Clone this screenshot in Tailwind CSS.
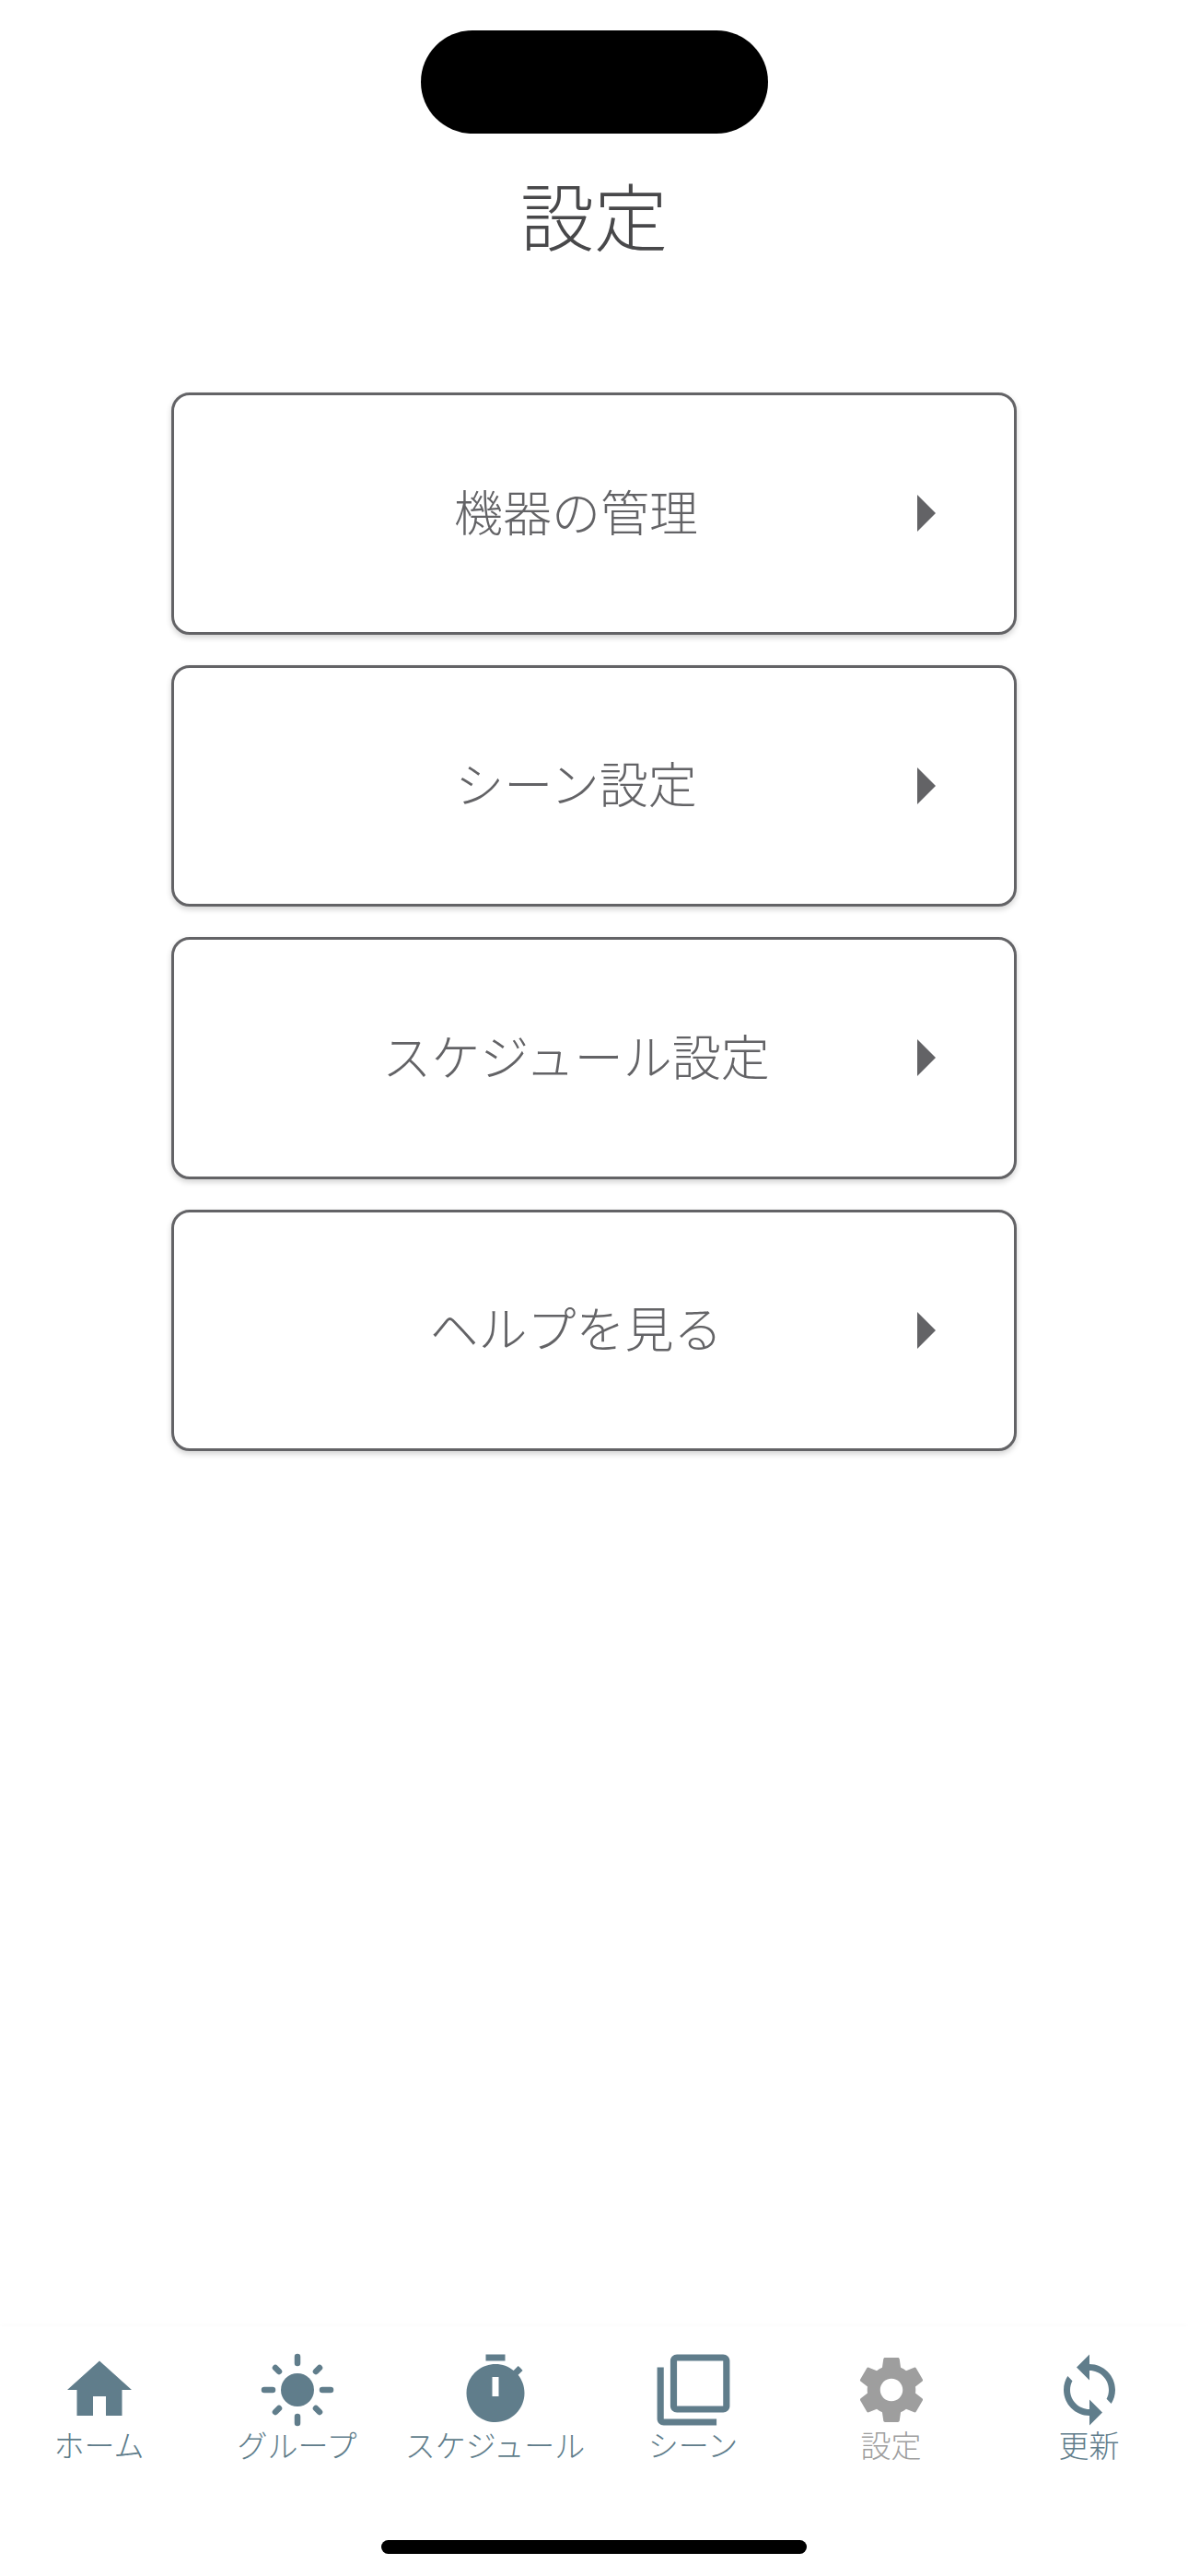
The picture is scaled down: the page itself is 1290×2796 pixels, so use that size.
<!DOCTYPE html>
<html lang="ja">
<head>
<meta charset="utf-8">
<script src="https://cdn.jsdelivr.net/npm/@tailwindcss/browser@4"></script>
</head>
<body class="bg-white">
<div class="relative flex flex-col w-[1290px] h-[2796px] bg-white overflow-hidden font-['Noto_Sans_CJK_JP','Noto_Sans',sans-serif]">
  <div class="absolute left-[457px] top-[33px] w-[377px] h-[112px] rounded-[56px] bg-black"></div>

  <h1 class="pt-[173px] h-[426px] text-center text-[80px] leading-[116px] font-light text-[#48484a]">設定</h1>

  <ul class="flex flex-col gap-[33px] w-[918px] mx-auto">
    <li class="flex items-center h-[262.5px] rounded-[20px] border-[3px] border-[#636366] bg-white shadow-[0_3px_6px_rgba(0,0,0,0.18)]">
      <span class="flex-1 pl-[66px] pb-[7px] text-center text-[53px] leading-[76px] font-light text-[#636366]">機器の管理</span>
      <svg class="w-[20px] h-[40px] mr-[85px]" viewBox="0 0 20 40"><path d="M0 0L20 20L0 40Z" fill="#636366"/></svg>
    </li>
    <li class="flex items-center h-[262.5px] rounded-[20px] border-[3px] border-[#636366] bg-white shadow-[0_3px_6px_rgba(0,0,0,0.18)]">
      <span class="flex-1 pl-[66px] pb-[7px] text-center text-[53px] leading-[76px] font-light text-[#636366]">シーン設定</span>
      <svg class="w-[20px] h-[40px] mr-[85px]" viewBox="0 0 20 40"><path d="M0 0L20 20L0 40Z" fill="#636366"/></svg>
    </li>
    <li class="flex items-center h-[262.5px] rounded-[20px] border-[3px] border-[#636366] bg-white shadow-[0_3px_6px_rgba(0,0,0,0.18)]">
      <span class="flex-1 pl-[66px] pb-[7px] text-center text-[53px] leading-[76px] font-light text-[#636366]">スケジュール設定</span>
      <svg class="w-[20px] h-[40px] mr-[85px]" viewBox="0 0 20 40"><path d="M0 0L20 20L0 40Z" fill="#636366"/></svg>
    </li>
    <li class="flex items-center h-[262.5px] rounded-[20px] border-[3px] border-[#636366] bg-white shadow-[0_3px_6px_rgba(0,0,0,0.18)]">
      <span class="flex-1 pl-[66px] pb-[7px] text-center text-[53px] leading-[76px] font-light text-[#636366]">ヘルプを見る</span>
      <svg class="w-[20px] h-[40px] mr-[85px]" viewBox="0 0 20 40"><path d="M0 0L20 20L0 40Z" fill="#636366"/></svg>
    </li>
  </ul>

  <div class="flex-1"></div>

  <nav class="grid grid-cols-6 h-[271px] px-0 pt-[27px] bg-white shadow-[0_-2px_6px_rgba(0,0,0,0.015)] text-[#607d8b]">
    <div class="flex flex-col items-center">
      <svg class="w-[84px] h-[84px]" viewBox="0 0 24 24" fill="currentColor"><path d="M10 20v-6h4v6h5v-8h3L12 3 2 12h3v8z"/></svg>
      <span class="text-[33px] leading-[34px] font-light whitespace-nowrap">ホーム</span>
    </div>
    <div class="flex flex-col items-center">
      <svg class="w-[84px] h-[84px]" viewBox="0 0 84 84" fill="currentColor" stroke="currentColor" stroke-width="6.5" stroke-linecap="round"><circle cx="42" cy="42" r="18" stroke="none"/><path d="M42 6V13M42 71V78M6 42H15M69 42H78M18 18L22 22M62 62L66 66M18 66L22 62M62 22L66 18"/></svg>
      <span class="text-[33px] leading-[34px] font-light whitespace-nowrap">グループ</span>
    </div>
    <div class="flex flex-col items-center">
      <svg class="w-[84px] h-[84px]" viewBox="0 0 24 24" fill="currentColor" fill-rule="evenodd"><path d="M15 1H9v2h6V1zm-4 13h2V8h-2v6zm8.03-6.61l1.42-1.42c-.43-.51-.9-.99-1.41-1.41l-1.42 1.42C16.07 4.74 14.12 4 12 4c-4.97 0-9 4.03-9 9s4.02 9 9 9 9-4.03 9-9c0-2.12-.74-4.07-1.97-5.61z"/></svg>
      <span class="text-[33px] leading-[34px] font-light whitespace-nowrap">スケジュール</span>
    </div>
    <div class="flex flex-col items-center">
      <svg class="w-[86px] h-[84px]" viewBox="0 0 24 24" fill="currentColor" preserveAspectRatio="none"><path d="M3 5H1v16c0 1.1.9 2 2 2h16v-2H3V5zm18-4H7c-1.1 0-2 .9-2 2v14c0 1.1.9 2 2 2h14c1.1 0 2-.9 2-2V3c0-1.1-.9-2-2-2zm0 16H7V3h14v14z"/></svg>
      <span class="text-[33px] leading-[34px] font-light whitespace-nowrap">シーン</span>
    </div>
    <div class="flex flex-col items-center text-[#9e9e9e]">
      <svg class="w-[84px] h-[84px]" viewBox="0 0 24 24" fill="currentColor"><path d="M19.43 12.98c.04-.32.07-.64.07-.98s-.03-.66-.07-.98l2.11-1.65c.19-.15.24-.42.12-.64l-2-3.46c-.12-.22-.39-.3-.61-.22l-2.49 1c-.52-.4-1.08-.73-1.69-.98l-.38-2.65C14.46 2.18 14.25 2 14 2h-4c-.25 0-.46.18-.49.42l-.38 2.65c-.61.25-1.17.59-1.69.98l-2.49-1c-.23-.09-.49 0-.61.22l-2 3.46c-.13.22-.07.49.12.64l2.11 1.65c-.04.32-.07.65-.07.98s.03.66.07.98l-2.11 1.65c-.19.15-.24.42-.12.64l2 3.46c.12.22.39.3.61.22l2.49-1c.52.4 1.08.73 1.69.98l.38 2.65c.03.24.24.42.49.42h4c.25 0 .46-.18.49-.42l.38-2.65c.61-.25 1.17-.59 1.69-.98l2.49 1c.23.09.49 0 .61-.22l2-3.46c.12-.22.07-.49-.12-.64l-2.11-1.65zM12 15.5c-1.93 0-3.5-1.57-3.5-3.5s1.57-3.5 3.5-3.5 3.5 1.57 3.5 3.5-1.57 3.5-3.5 3.5z"/></svg>
      <span class="text-[33px] leading-[34px] font-light whitespace-nowrap">設定</span>
    </div>
    <div class="flex flex-col items-center">
      <svg class="w-[84px] h-[84px]" viewBox="0 0 24 24" fill="currentColor"><path d="M12 4V1L8 5l4 4V6c3.31 0 6 2.69 6 6 0 1.01-.25 1.97-.7 2.8l1.46 1.46C19.54 15.03 20 13.57 20 12c0-4.42-3.58-8-8-8zm0 14c-3.31 0-6-2.69-6-6 0-1.01.25-1.97.7-2.8L5.24 7.74C4.46 8.97 4 10.43 4 12c0 4.42 3.58 8 8 8v3l4-4-4-4v3z"/></svg>
      <span class="text-[33px] leading-[34px] font-light whitespace-nowrap">更新</span>
    </div>
  </nav>

  <div class="absolute left-[414px] top-[2757px] w-[462px] h-[15px] rounded-full bg-black"></div>
</div>
</body>
</html>
